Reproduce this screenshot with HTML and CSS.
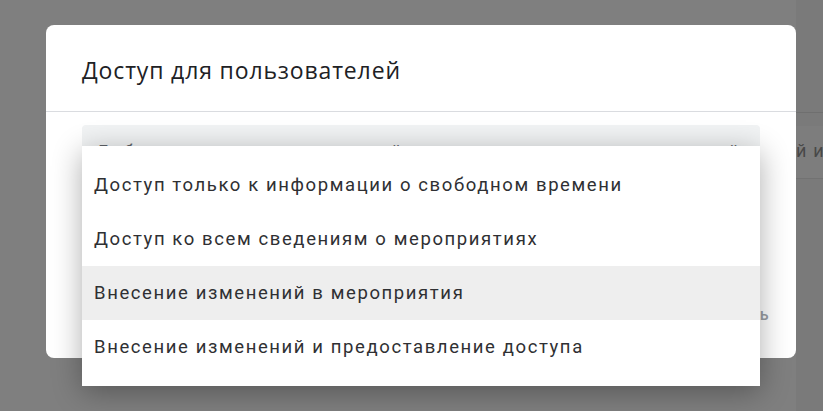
FILE: index.html
```html
<!DOCTYPE html>
<html lang="ru">
<head>
<meta charset="utf-8">
<link rel="stylesheet" href="styles.css">
</head>
<body>
<div class="page-behind">
  <div class="behind-band"><span class="behind-text">й и</span></div>
</div>
<div class="dialog">
  <div class="dialog-header">
    <h1 class="dialog-title">Доступ для пользователей</h1>
  </div>
  <div class="dialog-body">
    <div class="field">
      <span class="field-text">Добавьте адреса электронной почты или имена пользователей</span>
    </div>
  </div>
  <div class="dialog-footer">
    <span class="btn-text">Сохранить</span>
  </div>
</div>
<ul class="menu">
  <li class="menu-item">Доступ только к информации о свободном времени</li>
  <li class="menu-item">Доступ ко всем сведениям о мероприятиях</li>
  <li class="menu-item active">Внесение изменений в мероприятия</li>
  <li class="menu-item">Внесение изменений и предоставление доступа</li>
</ul>
</body>
</html>
```
FILE: styles.css
```css
html, body {
  margin: 0;
  padding: 0;
}
body {
  width: 823px;
  height: 411px;
  overflow: hidden;
  background: #7f7f7f;
  position: relative;
  font-family: Roboto, "Noto Sans", Arial, sans-serif;
}
.page-behind {
  position: absolute;
  left: 796px;
  top: 0;
  width: 27px;
  height: 411px;
  background: #7a7a7a;
  overflow: hidden;
}
.behind-band {
  margin-top: 112px;
  border-top: 1px solid #6f6f6f;
  padding-top: 13px;
  height: 160px;
}
.behind-text {
  display: block;
  height: 52px;
  background: #7d7d7d;
  border-bottom: 1px solid #727272;
  font-size: 18px;
  letter-spacing: 1.2px;
  line-height: 50px;
  color: #484848;
  white-space: nowrap;
  padding-left: 0;
}
.dialog {
  margin: 25px 0 0 46px;
  width: 750px;
  height: 333px;
  background: #fff;
  border-radius: 8px;
  display: flex;
  flex-direction: column;
  overflow: hidden;
}
.dialog-header {
  height: 86px;
  border-bottom: 1px solid #dadce0;
  padding: 0 36px;
  display: flex;
  align-items: center;
}
.dialog-title {
  margin: 4px 0 0;
  font-size: 23px;
  font-weight: 400;
  color: #202124;
  font-family: "Open Sans", Roboto, sans-serif;
  letter-spacing: 0.85px;
}
.dialog-body {
  padding: 13px 36px 0;
  flex: 1;
}
.field {
  height: 56px;
  background: #f1f3f4;
  border-radius: 4px 4px 0 0;
  padding: 16px 14px 0;
  box-sizing: border-box;
  overflow: hidden;
}
.field-text {
  font-size: 18px;
  letter-spacing: 1.8px;
  color: #5f6368;
  white-space: nowrap;
}
.dialog-footer {
  height: 53px;
  display: flex;
  justify-content: flex-end;
  align-items: flex-start;
  padding: 8px 27px 0 0;
}
.btn-text {
  font-size: 16px;
  color: #9aa0a6;
  font-weight: 500;
  letter-spacing: 0.5px;
}
.menu {
  position: absolute;
  left: 82px;
  top: 146px;
  width: 678px;
  margin: 0;
  padding: 12px 0;
  list-style: none;
  background: #fff;
  box-shadow: 0 6px 28px rgba(0, 0, 0, 0.32);
}
.menu-item {
  height: 54px;
  line-height: 54px;
  padding-left: 12px;
  font-size: 18.5px;
  letter-spacing: 1.6px;
  color: #2f3033;
  white-space: nowrap;
}
.menu-item.active {
  background: #eeeeee;
}
```
